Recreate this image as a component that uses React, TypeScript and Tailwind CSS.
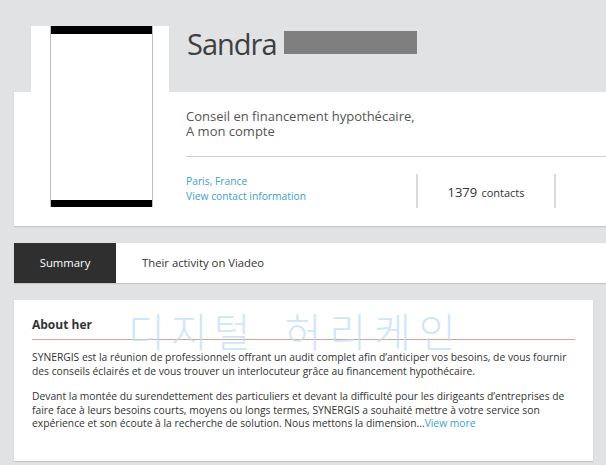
export default function App() {
  return (
    <div className="w-[606px] h-[465px] overflow-hidden bg-[#e1e2e4] font-['Open_Sans',sans-serif] pl-[14px] pt-[26px]">
      {/* Profile header */}
      <div className="relative w-[620px]">
        <div className="flex h-[66px]">
          <div className="ml-[17px] w-[138px] h-full bg-white" />
          <div className="ml-[18px] flex gap-[7px]">
            <span className="mt-[3px] text-[29px] leading-none tracking-[-1px] text-[#3f3f3f]">Sandra</span>
            <div className="mt-[5px] h-[23px] w-[133px] bg-[#7f7f7f]" />
          </div>
        </div>
        <div className="h-[134px] bg-white shadow-[0_1px_1px_rgba(0,0,0,0.12)] pl-[172px]">
          <p className="pt-[17px] text-[13px] leading-[15px] text-[#555]">
            Conseil en financement hypothécaire,
            <br />
            A mon compte
          </p>
          <div className="mt-[17px] h-px bg-[#cfcfcf]" />
          <div className="flex items-center mt-[17px]">
            <div className="w-[230px] -mt-[4px] text-[10.3px] leading-[15px] text-[#3d9fca]">
              <div>Paris, France</div>
              <div>View contact information</div>
            </div>
            <div className="h-[34px] w-[2px] bg-[#dadada]" />
            <div className="w-[136px] text-center text-[#333]">
              <span className="text-[13px]">1379</span> <span className="text-[11px]">contacts</span>
            </div>
            <div className="h-[34px] w-[2px] bg-[#dadada]" />
          </div>
        </div>
        {/* Photo */}
        <div className="absolute left-[36px] top-0 w-[103px] h-[181px] flex flex-col border-x border-[#bdbdbd]">
          <div className="h-[8px] bg-black" />
          <div className="flex-1 bg-white" />
          <div className="h-[7px] bg-black" />
        </div>
      </div>

      {/* Tabs */}
      <div className="mt-[17px] w-[620px] h-[40px] bg-white flex items-center text-[11.3px] shadow-[0_1px_1px_rgba(0,0,0,0.12)]">
        <div className="w-[102px] h-full bg-[#2f2f2f] text-white flex items-center justify-center">Summary</div>
        <div className="ml-[26px] text-[#333]">Their activity on Viadeo</div>
      </div>

      {/* About */}
      <div className="relative mt-[17px] w-[579px] h-[161px] bg-white px-[18px] pt-[16px] shadow-[0_1px_1px_rgba(0,0,0,0.12)]">
        <h2 className="text-[12px] font-bold text-[#333] leading-[18px]">About her</h2>
        <div className="mt-[5px] h-px bg-[#d6a48f]" />
        <div className="mt-[11px] text-[10.3px] leading-[13.5px] text-[#333]">
          <p>
            SYNERGIS est la réunion de professionnels offrant un audit complet afin d’anticiper vos besoins, de vous fournir des conseils éclairés et de vous trouver un interlocuteur grâce au financement hypothécaire.
          </p>
          <p className="mt-[12px]">
            Devant la montée du surendettement des particuliers et devant la difficulté pour les dirigeants d’entreprises de faire face à leurs besoins courts, moyens ou longs termes, SYNERGIS a souhaité mettre à votre service son expérience et son écoute à la recherche de solution. Nous mettons la dimension...<span className="text-[#3d9fca]">View more</span>
          </p>
        </div>
        <div className="absolute left-[114px] top-[10px] flex gap-[28px] text-[40px] leading-none tracking-[6px] text-[#bcdcf7] opacity-70 font-['Noto_Sans_CJK_KR',sans-serif] font-light pointer-events-none">
          <span>디지털</span>
          <span className="tracking-[8px]">허리케인</span>
        </div>
      </div>
    </div>
  );
}
